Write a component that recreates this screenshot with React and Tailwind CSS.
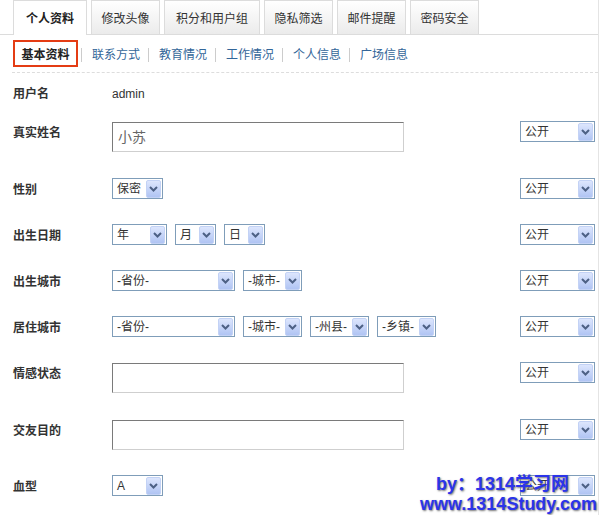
import React from 'react';

// personal-profile form: top tabs, sub navigation, field rows with privacy selects
const tabs = ['个人资料', '修改头像', '积分和用户组', '隐私筛选', '邮件提醒', '密码安全'];
const tabWidths = ['w-[74px]', 'w-[69px]', 'w-[96px]', 'w-[69px]', 'w-[69px]', 'w-[69px]'];
const subLinks = ['联系方式', '教育情况', '工作情况', '个人信息', '广场信息'];

function Chevron() {
    return (
        <svg width="9" height="6" viewBox="0 0 9 6">
            <path d="M1 1l3.5 3.5L8 1" fill="none" stroke="#4d6185" strokeWidth="2" />
        </svg>
    );
}

function Select({ value, className = '' }) {
    return (
        <div className={`flex h-[21px] shrink-0 items-center border border-[#7f9db9] bg-white ${className}`}>
            <span className="flex-1 overflow-hidden whitespace-nowrap pl-[4px] pt-px text-[12px] leading-none text-[#333]">
                {value}
            </span>
            <span className="mr-[1px] flex h-[18px] w-[15px] items-center justify-center rounded-[2px] border border-[#c3d2f5] bg-linear-to-b from-[#dde6fd] to-[#b0c4f3]">
                <Chevron />
            </span>
        </div>
    );
}

function TextInput({ value = '' }) {
    return (
        <div className="mt-[1px] flex h-[30px] w-[292px] items-center border border-t-[#7a7a7a] border-l-[#7a7a7a] border-r-[#cfcfcf] border-b-[#cfcfcf] bg-white pl-[5px] text-[14px] text-[#666]">
            {value}
        </div>
    );
}

const rows = [
    { label: '真实姓名', h: 'h-[57px]', content: <TextInput value="小苏" /> },
    { label: '性别', h: 'h-[46px]', content: <Select value="保密" className="w-[51px]" /> },
    {
        label: '出生日期',
        h: 'h-[46px]',
        content: (
            <>
                <Select value="年" className="w-[55px]" />
                <Select value="月" className="w-[41px]" />
                <Select value="日" className="w-[41px]" />
            </>
        ),
    },
    {
        label: '出生城市',
        h: 'h-[46px]',
        content: (
            <>
                <Select value="-省份-" className="w-[123px]" />
                <Select value="-城市-" className="w-[59px]" />
            </>
        ),
    },
    {
        label: '居住城市',
        h: 'h-[46px]',
        content: (
            <>
                <Select value="-省份-" className="w-[123px]" />
                <Select value="-城市-" className="w-[59px]" />
                <Select value="-州县-" className="w-[59px]" />
                <Select value="-乡镇-" className="w-[59px]" />
            </>
        ),
    },
    { label: '情感状态', h: 'h-[57px]', content: <TextInput /> },
    { label: '交友目的', h: 'h-[56px]', content: <TextInput /> },
    { label: '血型', h: 'h-[46px]', content: <Select value="A" className="w-[51px]" /> },
];

export default function App() {
    return (
        <div className="relative h-[515px] w-[599px] overflow-hidden border-r border-[#e4e4e4] bg-white font-[family-name:'Liberation_Sans','Noto_Sans_CJK_SC',sans-serif] text-[12px] text-[#333]">
            {/* tabs */}
            <div className="flex h-[35px] items-end gap-[4px] border-b border-[#dcdcdc] pl-[13px]">
                {tabs.map((t, i) =>
                    i === 0 ? (
                        <div
                            key={t}
                            className={`${tabWidths[i]} -mb-px flex h-[35px] items-center justify-center border border-b-0 border-[#dcdcdc] bg-white pt-px text-[12px] font-bold text-[#222]`}
                        >
                            {t}
                        </div>
                    ) : (
                        <div
                            key={t}
                            className={`${tabWidths[i]} flex h-[34px] items-center justify-center border border-b-0 border-[#dcdcdc] bg-linear-to-b from-white to-[#ebebeb] pt-[2px] text-[12px] text-[#333]`}
                        >
                            {t}
                        </div>
                    )
                )}
            </div>

            {/* sub navigation */}
            <div className="mt-[5px] flex h-[27px] items-center pl-[13px]">
                <div className="flex h-[27px] w-[65px] items-center justify-center border-2 border-[#e43c14] pt-[2px] font-bold text-[#222]">
                    基本资料
                </div>
                <span className="ml-[3px] mt-[2px] h-[14px] w-px bg-[#cccccc]" />
                {subLinks.map((l, i) => (
                    <React.Fragment key={l}>
                        <a className="ml-[10px] pt-[3px] text-[12px] text-[#336699]">{l}</a>
                        {i < subLinks.length - 1 ? (
                            <span className="ml-[8px] mt-[2px] h-[14px] w-px bg-[#cccccc]" />
                        ) : null}
                    </React.Fragment>
                ))}
            </div>

            <div className="ml-[12px] mt-[5px] border-t border-dashed border-[#dddddd]" />

            {/* fields */}
            <div className="pl-[13px] pr-[3px]">
                <div className="flex h-[35px] pt-[14px] leading-[14px]">
                    <div className="w-[99px] font-bold">用户名</div>
                    <div>admin</div>
                </div>
                {rows.map((r) => (
                    <div key={r.label} className={`flex ${r.h} items-start pt-[13px]`}>
                        <div className="w-[99px] pt-[5px] font-bold leading-[15px]">{r.label}</div>
                        <div className="flex flex-1 items-start gap-[8px]">{r.content}</div>
                        <Select value="公开" className="w-[75px]" />
                    </div>
                ))}
            </div>

            {/* watermark */}
            <div className="absolute left-[420px] top-[474px] text-[18px] font-bold leading-[20px] text-[#2b34ea] [text-shadow:1px_1px_2px_#777]">
                <div className="pl-[16px]">by：1314学习网</div>
                <div>www.1314Study.com</div>
            </div>
        </div>
    );
}
